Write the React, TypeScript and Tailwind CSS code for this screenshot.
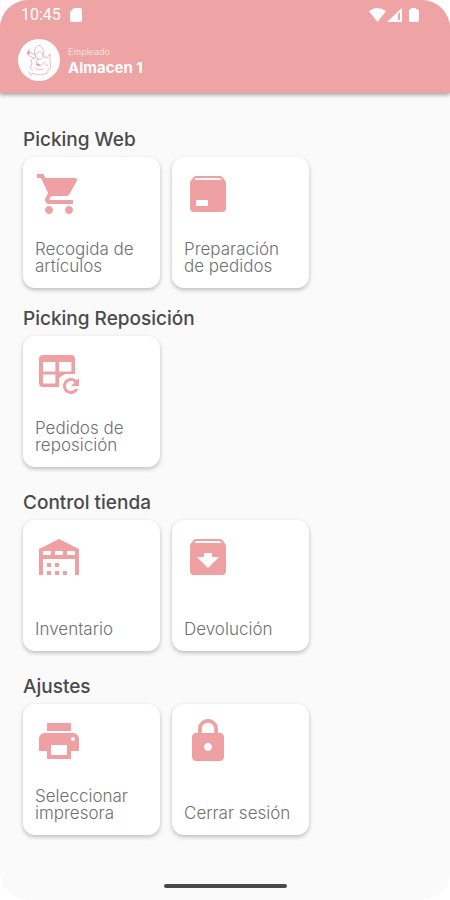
import React from "react";
import { MdLock, MdPrint, MdShoppingCart } from "react-icons/md";

const CajaIcon = () => (
  <svg viewBox="0 0 24 24" fill="currentColor" className="size-12" aria-hidden="true">
    <path d="M5.12 5H18.87L17.93 4H5.93L5.12 5M20.54 5.23C20.83 5.57 21 6 21 6.5V19A2 2 0 0 1 19 21H5A2 2 0 0 1 3 19V6.5C3 6 3.17 5.57 3.46 5.23L4.84 3.55C5.12 3.21 5.53 3 6 3H18C18.47 3 18.88 3.21 19.15 3.55L20.54 5.23M6 18H12V15H6V18Z" />
  </svg>
);

const ReposicionIcon = () => (
  <svg viewBox="0 0 24 24" fill="currentColor" className="size-12" aria-hidden="true">
    <path
      fillRule="evenodd"
      d="M4 3H18A2 2 0 0 1 20 5V12.5H15L12 14.5V19H4A2 2 0 0 1 2 17V5A2 2 0 0 1 4 3M4 6.5V11.2H10.2V6.5H4M12 6.5V11.2H18.2V6.5H12M4 12.8V17.2H10.2V12.8H4Z"
    />
    <path d="M18 14.5C19.11 14.5 20.11 14.95 20.83 15.67L22 14.5V18.5H18L19.77 16.73C19.32 16.28 18.69 16 18 16C16.62 16 15.5 17.12 15.5 18.5C15.5 19.88 16.62 21 18 21C18.82 21 19.55 20.61 20 20H21.71C21.12 21.47 19.68 22.5 18 22.5C15.79 22.5 14 20.71 14 18.5C14 16.29 15.79 14.5 18 14.5" />
  </svg>
);

const AlmacenIcon = () => (
  <svg viewBox="0 0 24 24" fill="currentColor" className="size-12" aria-hidden="true">
    <path d="M6 19H8V21H6V19M12 3L2 8V21H4V13H20V21H22V8L12 3M8 11H4V9H8V11M14 11H10V9H14V11M20 11H16V9H20V11M6 15H8V17H6V15M10 15H12V17H10V15M10 19H12V21H10V19M14 19H16V21H14V19Z" />
  </svg>
);

const DevolucionIcon = () => (
  <svg viewBox="0 0 24 24" fill="currentColor" className="size-12" aria-hidden="true">
    <path d="M20.54 5.23L19.15 3.55C18.88 3.21 18.47 3 18 3H6C5.53 3 5.12 3.21 4.84 3.55L3.46 5.23C3.17 5.57 3 6 3 6.5V19A2 2 0 0 0 5 21H19A2 2 0 0 0 21 19V6.5C21 6 20.83 5.57 20.54 5.23M12 17.5L6.5 12H10V10H14V12H17.5L12 17.5M5.12 5L5.93 4H17.93L18.87 5H5.12Z" />
  </svg>
);

const Logo = () => (
  <svg viewBox="0 0 42 42" className="size-[42px] rounded-full bg-white text-[#e79aa8]" aria-hidden="true">
    <g fill="none" stroke="currentColor" strokeWidth="0.7" strokeLinecap="round" strokeLinejoin="round">
      <path d="M17 16C15 13 17 8 21 6C24 8 27 11 25 16" />
      <path d="M18 15C20 12 23 12 25 15C26 19 23 21 20 20C17 19 17 17 18 15" />
      <path d="M25 17L29 19L32 15V24C34 28 32 31 29 32" />
      <path d="M17 19L13 21L14 25L12 29L15 31M20 20L18 24L22 27L27 23" />
      <path d="M17 16L13 14L11 11L9 15L13 18L16 19" />
      <path d="M12 33C10 36 14 37 15 34C18 37 21 34 23 36C26 37 27 33 30 34" />
      <path d="M27 25L30 27M17 29L20 31L25 30" />
    </g>
    <circle cx="10.5" cy="14" r="1.4" fill="currentColor" />
    <path d="M20 27.5L18 25.5Q19 24 20 25Q21 24 22 25.5Z" fill="currentColor" />
  </svg>
);

const bloques = [
  [
    {
      titulo: "Picking Web",
      opciones: [
        { nombre: "Recogida de artículos", icono: <MdShoppingCart className="size-12" /> },
        { nombre: "Preparación de pedidos", icono: <CajaIcon /> },
      ],
    },
    {
      titulo: "Picking Reposición",
      opciones: [{ nombre: "Pedidos de reposición", icono: <ReposicionIcon /> }],
    },
  ],
  [
    {
      titulo: "Control tienda",
      opciones: [
        { nombre: "Inventario", icono: <AlmacenIcon /> },
        { nombre: "Devolución", icono: <DevolucionIcon /> },
      ],
    },
  ],
  [
    {
      titulo: "Ajustes",
      opciones: [
        { nombre: "Seleccionar impresora", icono: <MdPrint className="size-12" /> },
        { nombre: "Cerrar sesión", icono: <MdLock className="size-12" /> },
      ],
    },
  ],
];

const Cabecera = () => (
  <header className="bg-[#eea4a4] text-white shadow-[0_2px_4px_rgba(0,0,0,0.35)]">
    <div className="flex h-[30px] items-center justify-between pl-[21px] pr-[30px]">
      <div className="flex items-center gap-2">
        <span className="font-[Roboto,sans-serif] text-base">10:45</span>
        <svg viewBox="0 0 14 16" fill="currentColor" className="h-4 w-3.5" aria-hidden="true">
          <path d="M5 1H11Q13 1 13 3V13Q13 15 11 15H3Q1 15 1 13V5Z" />
        </svg>
      </div>
      <svg viewBox="0 0 52 16" fill="currentColor" className="h-4 w-[52px]" aria-hidden="true">
        <path d="M1 4Q9 -2 18 4L9.5 15Z" />
        <path fillRule="evenodd" d="M34 1V15H19ZM30 7V13H32V5Z" />
        <path d="M43 1H48V2Q51 2 51 5V13Q51 15 49 15H43Q41 15 41 13V5Q41 2 43 2Z" />
      </svg>
    </div>
    <div className="flex items-center gap-2 px-[18px] pb-3 pt-[9px]">
      <Logo />
      <div className="pt-1">
        <p className="text-[9px] font-light leading-3 text-white/80">Empleado</p>
        <p className="text-[15px] font-bold leading-5">Almacen 1</p>
      </div>
    </div>
  </header>
);

export default function App() {
  return (
    <div className="bg-white font-[Inter,sans-serif]">
      <div className="flex min-h-screen flex-col overflow-hidden rounded-[28px] bg-[#fafafa]">
        <Cabecera />
        <main className="flex flex-col gap-[25px] px-[23px] pt-9">
          {bloques.map((secciones, i) => (
            <div key={i} className="flex flex-col gap-5">
              {secciones.map((seccion) => (
                <section key={seccion.titulo}>
                  <h2 className="h-7 text-[19px] font-medium leading-[22px] text-[#4a4a4a]">{seccion.titulo}</h2>
                  <div className="flex flex-wrap gap-3">
                    {seccion.opciones.map((opcion) => (
                      <button
                        key={opcion.nombre}
                        type="button"
                        className="flex h-[131px] w-[137px] flex-col items-start justify-between rounded-xl bg-white px-3 py-[13px] text-left text-[#eea0a2] shadow-[0_2px_4px_rgba(0,0,0,0.25)]"
                      >
                        {opcion.icono}
                        <span className="text-[17px] font-light leading-[17px] text-[#707070]">{opcion.nombre}</span>
                      </button>
                    ))}
                  </div>
                </section>
              ))}
            </div>
          ))}
        </main>
        <footer className="mt-auto flex justify-center pb-3">
          <div className="h-1 w-[123px] rounded-full bg-[#4a4a4a]" />
        </footer>
      </div>
    </div>
  );
}
